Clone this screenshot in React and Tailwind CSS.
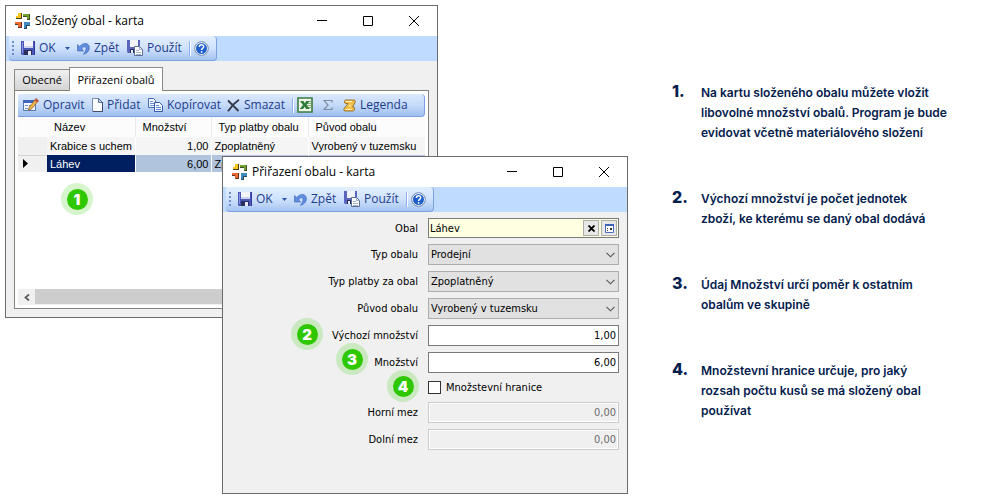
import { useState } from 'react';

const notes = [
  ['Na kartu složeného obalu můžete vložit', 'libovolné množství obalů. Program je bude', 'evidovat včetně materiálového složení'],
  ['Výchozí množství je počet jednotek', 'zboží, ke kterému se daný obal dodává'],
  ['Údaj Množství určí poměr k ostatním', 'obalům ve skupině'],
  ['Množstevní hranice určuje, pro jaký', 'rozsah počtu kusů se má složený obal', 'používat'],
];

function LogoIcon() {
  return (
    <svg className="w-4 h-4 shrink-0" viewBox="0 0 16 16">
      <path d="M3 0h4v6H1V3h2z" fill="#4a4020" />
      <path d="M3 0h3v5H1V3h2z" fill="#f5c518" />
      <path d="M8 1h7v6h-3V4H8z" fill="#3c4a2a" />
      <path d="M8 1h6v5h-2V3H8z" fill="#6fa32d" />
      <path d="M0 9h7v6H3v-3H0z" fill="#5a3524" />
      <path d="M0 9h6v5H3v-3H0z" fill="#ee6730" />
      <path d="M9 9h6v4h-3v3H9z" fill="#2b4a5e" />
      <path d="M9 9h6v3h-4v3H9z" fill="#3f8abf" />
    </svg>
  );
}

function SaveIcon() {
  return (
    <svg className="w-[14px] h-[14px] shrink-0" viewBox="0 0 14 14">
      <path d="M0 0h14v14H1l-1-1z" fill="#4a57b8" />
      <path d="M1 1h1v11H1z" fill="#8794e0" />
      <path d="M3 0h9v7H3z" fill="#f4f6fc" />
      <path d="M3 5h9v2H3z" fill="#cdd4ee" />
      <path d="M3 9h8v5H3z" fill="#2a2f5e" />
      <path d="M7 10h3v4H7z" fill="#e8ebf7" />
      <path d="M13 0h1v14h-1z" fill="#2f3a99" />
    </svg>
  );
}

function ApplyIcon() {
  return (
    <svg className="w-4 h-4 shrink-0" viewBox="0 0 16 16">
      <path d="M0 0h13v13H1l-1-1z" fill="#5a66bd" />
      <path d="M3 0h8v7H3z" fill="#f2f4fc" />
      <path d="M3 9h6v4H3z" fill="#262c5c" />
      <path d="M4 10h2v3H4z" fill="#e8ebf7" />
      <path d="M7.500 6.500h5l3 3v6h-8z" fill="#fff" stroke="#5b6f96" />
      <path d="M12.500 6.500v3h3M9 10.500h3M9 12.500h5M9 14.500h5" stroke="#8a9bbd" fill="none" strokeWidth="0.8" />
    </svg>
  );
}

function UndoIcon() {
  return (
    <svg className="w-[13px] h-[13px] shrink-0" viewBox="0 0 13 13">
      <path d="M.5 2.500v6.500h6.200L4.600 7C5.800 4.600 8.700 4 9 6.300c.2 2-1 4-2.600 6 3.300-.6 6-3.200 6-6.700C12.300.9 6.500-.3 2.700 4.500z" fill="#5f8de0" stroke="#3a62b3" strokeWidth="0.6" />
    </svg>
  );
}

function HelpIcon() {
  return (
    <svg className="w-[15px] h-[15px] shrink-0" viewBox="0 0 15 15">
      <circle cx="7.500" cy="7.500" r="6.800" fill="#fff" stroke="#6f86aa" />
      <circle cx="7.500" cy="7.500" r="5.500" fill="#1f5fcb" />
      <path d="M5.400 6c0-3 4.300-2.800 4.300-.3C9.700 7.200 7.600 7.200 7.600 9" fill="none" stroke="#fff" strokeWidth="1.500" />
      <circle cx="7.600" cy="10.900" r="0.900" fill="#fff" />
    </svg>
  );
}

function EditIcon() {
  return (
    <svg className="w-4 h-[14px] shrink-0" viewBox="0 0 16 14">
      <path d="M.5 2.500h12v10H.5z" fill="#f6f9ff" stroke="#5577b5" />
      <path d="M0 2h13v3H0z" fill="#3f68bd" />
      <path d="M2 7.500h3M2 10.500h3M6 7.500h3" stroke="#6f8fd0" />
      <path d="M13 .5l2.500 2.300L8.500 11l-3.300 1.300L6.300 9z" fill="#f0b44c" stroke="#80592a" strokeWidth="0.7" />
      <path d="M13 .5l2.500 2.300-1.500 1.700-2.500-2.300z" fill="#c9503f" />
    </svg>
  );
}

function PageIcon() {
  return (
    <svg className="w-[11px] h-[14px] shrink-0" viewBox="0 0 11 14">
      <path d="M.5.5h6l4 4v9H.5z" fill="#fafcff" stroke="#7c8cab" />
      <path d="M6.500.5v4h4z" fill="#c9d5ea" stroke="#5c7097" />
      <path d="M10.500 4v9.500H1" fill="none" stroke="#3c4c6b" />
    </svg>
  );
}

function CopyIcon() {
  return (
    <svg className="w-[15px] h-[14px] shrink-0" viewBox="0 0 15 14">
      <path d="M.5.500h5l2 2v7h-7z" fill="#f3f7ff" stroke="#4469b8" />
      <path d="M2 3.500h3M2 5.500h4M2 7.500h4" stroke="#6f92d8" />
      <path d="M6.500 4.500h5l3 3v6h-8z" fill="#f3f7ff" stroke="#3558a8" />
      <path d="M8 7.500h3M8 9.500h5M8 11.500h5" stroke="#5f84d0" />
    </svg>
  );
}

function DeleteIcon() {
  return (
    <svg className="w-[13px] h-[13px] shrink-0" viewBox="0 0 13 13">
      <path d="M1 1.500l10.500 10.500M12 .8C8 3.500 4 7.500 1 12.200" fill="none" stroke="#343b4c" strokeWidth="1.900" />
    </svg>
  );
}

function ExcelIcon() {
  return (
    <svg className="w-4 h-4 shrink-0" viewBox="0 0 16 16">
      <path d="M1 1h14v14H1z" fill="#eef6ea" stroke="#3b7a3f" strokeWidth="1.600" />
      <path d="M9 4.500h5M10 6.500h4M10 8.500h4M10 10.500h4" stroke="#7fb07c" />
      <path d="M3 4h3.500L7.800 6.200 9.300 4h3.300L9.500 8l3.300 4H9.200L7.600 9.700 6 12H2.700L6 8z" fill="#2f7d38" />
    </svg>
  );
}

function SigmaIcon() {
  return (
    <svg className="w-[10px] h-[10px] shrink-0" viewBox="0 0 10 10">
      <path d="M9 2.500V.500H1L5 5 1 9.500h8v-2" fill="none" stroke="#7f8b9f" strokeWidth="1.200" />
    </svg>
  );
}

function LegendIcon() {
  return (
    <svg className="w-[13px] h-[13px] shrink-0" viewBox="0 0 13 13">
      <path d="M2.500 1H11c1.200 0 1.600 1.800.9 2.600L9.600 8h1c1.500 0 1.300 3.500-.3 4H2C.4 12 .3 9.300 1.800 8.800L5 4.500H2.700C1 4.500 1 1.300 2.500 1z" fill="#f2c04c" stroke="#94661c" strokeWidth="0.900" />
      <path d="M3 2.500h6M3 10.500h5.500M6 6.500h2" stroke="#fff0b8" />
    </svg>
  );
}

function Separator() {
  return <span className="w-px h-[15px] bg-[#8fb2ea] shadow-[1px_0_0_#fff]" />;
}

function ToolButton({ icon, label, className = '' }) {
  return (
    <button type="button" className={`flex items-center gap-1 h-5 whitespace-nowrap ${className}`}>
      {icon}
      {label}
    </button>
  );
}

function CardToolbar() {
  return (
    <div className="bg-[#bfdbff] h-[25px] pl-[3px]">
      <div className="w-[208px] h-[25px] flex items-center rounded-r-sm rounded-bl-sm bg-linear-to-b from-[#e3efff] via-[#d0e2fd] to-[#a5c4f0] border-b border-r border-[#7ba1de] font-['Open_Sans',sans-serif] text-xs text-[#1e3c8c]">
        <span className="flex flex-col gap-[2px] w-3 pl-[3px]">
          {[0, 1, 2, 3].map((i) => (
            <span key={i} className="w-[2px] h-[2px] bg-[#6e8fc9]" />
          ))}
        </span>
        <ToolButton icon={<SaveIcon />} label="OK" className="w-[41px]" />
        <button type="button" aria-label="Další možnosti" className="w-[15px] h-5 flex items-center pl-[3px]">
          <svg className="w-[5px] h-[3px]" viewBox="0 0 5 3">
            <path d="M0 0h5L2.500 3z" fill="#2a55a5" />
          </svg>
        </button>
        <ToolButton icon={<UndoIcon />} label="Zpět" className="w-[50px]" />
        <ToolButton icon={<ApplyIcon />} label="Použít" className="w-[62px]" />
        <Separator />
        <button type="button" aria-label="Nápověda" className="h-5 pl-1">
          <HelpIcon />
        </button>
      </div>
    </div>
  );
}

function CardWindow({ title, className, children }) {
  return (
    <section className={`absolute border border-[#6b6b6b] bg-[#f0f0f0] text-black ${className}`}>
      <header className="h-[30px] bg-white flex items-center pl-[9px] pr-[18px] gap-1">
        <LogoIcon />
        <h2 className="flex-1 font-['Open_Sans',sans-serif] text-xs whitespace-nowrap">{title}</h2>
        <div className="flex gap-9">
          <button type="button" aria-label="Minimalizovat">
            <svg className="w-[10px] h-[10px]" viewBox="0 0 10 10"><path d="M0 4.500h10" stroke="#000" /></svg>
          </button>
          <button type="button" aria-label="Maximalizovat">
            <svg className="w-[10px] h-[10px]" viewBox="0 0 10 10"><path d="M.5.500h9v9h-9z" stroke="#000" fill="none" /></svg>
          </button>
          <button type="button" aria-label="Zavřít">
            <svg className="w-[10px] h-[10px]" viewBox="0 0 10 10"><path d="M0 0l10 10M10 0L0 10" stroke="#000" /></svg>
          </button>
        </div>
      </header>
      <CardToolbar />
      {children}
    </section>
  );
}

function Badge({ n, className }) {
  return (
    <span className={`absolute w-8 h-8 rounded-full bg-[#33cc00]/20 flex items-center justify-center ${className}`}>
      <span className="w-[21px] h-[21px] rounded-full bg-[#2fc800] text-white font-['Inter',sans-serif] font-black text-[15px] leading-[21px] text-center">
        {n}
      </span>
    </span>
  );
}

function PackagingList() {
  return (
    <div className="pt-[6px] px-2 pb-2">
      <div role="tablist" className="flex items-end font-['Open_Sans',sans-serif] text-[11px]">
        <button type="button" role="tab" aria-selected="false" className="h-[21px] w-[56px] bg-linear-to-b from-[#f0f0f0] to-[#d5d5d5] border border-b-0 border-[#8b8b83] leading-5">
          Obecné
        </button>
        <button type="button" role="tab" aria-selected="true" className="relative -ml-px -mb-px h-6 w-[94px] bg-white border border-b-0 border-[#8b8b83] whitespace-nowrap leading-5">
          Přiřazení obalů
        </button>
      </div>
      <div className="border border-[#84847c] bg-white p-[3px]">
        <div className="h-[23px] flex items-center pl-[5px] rounded-r-sm bg-linear-to-b from-[#dce9fd] via-[#c5daf9] to-[#9fbfee] border-b border-r border-[#7ba1de] font-['Open_Sans',sans-serif] text-xs text-[#1e3c8c]">
          <ToolButton icon={<EditIcon />} label="Opravit" className="w-[69px]" />
          <ToolButton icon={<PageIcon />} label="Přidat" className="w-[56px]" />
          <ToolButton icon={<CopyIcon />} label="Kopírovat" className="w-[79px]" />
          <ToolButton icon={<DeleteIcon />} label="Smazat" className="w-[65px]" />
          <Separator />
          <button type="button" aria-label="Excel" className="w-[30px] pl-1"><ExcelIcon /></button>
          <button type="button" aria-label="Součet" className="w-5"><SigmaIcon /></button>
          <ToolButton icon={<LegendIcon />} label="Legenda" />
        </div>
        <div className="relative min-h-[172px]">
          <table className="w-full table-fixed font-['Liberation_Sans',Arial,sans-serif] text-[11px] leading-4 whitespace-nowrap">
            <colgroup>
              <col className="w-[29px]" />
              <col className="w-[88px]" />
              <col className="w-[76px]" />
              <col className="w-[97px]" />
              <col />
            </colgroup>
            <thead>
              <tr className="h-5 bg-[#fcfcfc]">
                <th aria-label="Výběr" />
                <th className="font-normal text-left pl-[7px] border-r border-[#e9e9e9]">Název</th>
                <th className="font-normal text-left pl-[7px] border-r border-[#e9e9e9]">Množství</th>
                <th className="font-normal text-left pl-[7px] border-r border-[#e9e9e9]">Typ platby obalu</th>
                <th className="font-normal text-left pl-[7px]">Původ obalu</th>
              </tr>
            </thead>
            <tbody>
              <tr className="h-[18px] bg-[#f5f5f5]">
                <td className="bg-[#f0f0f0] border-b border-[#d9d5ce]" />
                <td className="pl-[3px]">Krabice s uchem</td>
                <td className="pr-[2px] text-right border-x border-white">1,00</td>
                <td className="pl-[3px]">Zpoplatněný</td>
                <td className="pl-[3px] border-l border-white">Vyrobený v tuzemsku</td>
              </tr>
              <tr className="h-[17px] bg-[#b0c4de]">
                <td className="bg-[#f0f0f0] pl-[5px]">
                  <svg className="w-[5px] h-[9px]" viewBox="0 0 5 9"><path d="M0 0l5 4.500L0 9z" /></svg>
                </td>
                <td className="pl-[3px] bg-[#001f60] text-white">Láhev</td>
                <td className="pr-[2px] text-right border-x border-white">6,00</td>
                <td className="pl-[3px]">Zpoplatněný</td>
                <td className="border-l border-white" />
              </tr>
            </tbody>
          </table>
          <Badge n="1" className="left-[43px] top-[66px]" />
        </div>
        <div className="h-4 flex bg-[#f0f0f0]">
          <button type="button" aria-label="Posunout vlevo" className="w-[17px] flex items-center justify-center">
            <svg className="w-[6px] h-[7px]" viewBox="0 0 6 7"><path d="M5 .5L1.500 3.500 5 6.500" stroke="#5c5c5c" strokeWidth="1.800" fill="none" /></svg>
          </button>
          <span className="w-[240px] h-[15px] bg-[#cdcdcd]" />
        </div>
      </div>
    </div>
  );
}

function SelectField({ id, label, value }) {
  return (
    <>
      <label htmlFor={id} className="text-right">{label}</label>
      <div className="relative">
        <select id={id} defaultValue={value} className="appearance-none block w-full h-[21px] pl-[2px] bg-[#e1e1e1] border border-[#adadad]">
          <option>{value}</option>
        </select>
        <svg className="absolute right-1 top-2 w-[9px] h-[6px] pointer-events-none" viewBox="0 0 9 6">
          <path d="M.5.800l4 4 4-4" stroke="#555" strokeWidth="1.100" fill="none" />
        </svg>
      </div>
    </>
  );
}

function NumberField({ id, label, value, disabled = false, badge }) {
  return (
    <>
      <div className="relative text-right">
        {badge}
        <label htmlFor={id}>{label}</label>
      </div>
      <input
        id={id}
        type="text"
        defaultValue={value}
        disabled={disabled}
        className="w-full h-[21px] pr-[2px] text-right bg-white border border-[#7a7a7a] disabled:bg-[#f0f0f0] disabled:border-[#cccccc] disabled:text-[#6d6d6d] disabled:shadow-[inset_0_0_0_1px_#fff]"
      />
    </>
  );
}

function AssignmentForm() {
  const [obal, setObal] = useState('Láhev');
  const [limit, setLimit] = useState(false);

  return (
    <form className="grid grid-cols-[195px_1fr] gap-x-[10px] gap-y-[6px] items-center pt-[6px] pr-2 pb-[43px] font-['DejaVu_Sans_Condensed','DejaVu_Sans',sans-serif] text-[11px] leading-[17px]">
      <label htmlFor="obal" className="text-right">Obal</label>
      <div className="h-5 flex items-center gap-[2px] pr-px bg-[#ffffe1] border border-[#7a7a7a]">
        <input id="obal" type="text" value={obal} onChange={(e) => setObal(e.target.value)} className="flex-1 min-w-0 pl-px outline-none" />
        <button type="button" aria-label="Vymazat" onClick={() => setObal('')} className="w-4 h-4 flex items-center justify-center bg-[#e8e8e8] border border-[#adadad]">
          <svg className="w-[7px] h-[7px]" viewBox="0 0 7 7"><path d="M.5.500l6 6M6.500.500l-6 6" stroke="#000" strokeWidth="1.800" /></svg>
        </button>
        <button type="button" aria-label="Vybrat" className="w-4 h-4 flex items-center justify-center bg-[#e8e8e8] border border-[#adadad]">
          <svg className="w-[9px] h-[9px]" viewBox="0 0 9 9">
            <path d="M.5.500h8v8h-8z" fill="#fff" stroke="#4a6fc0" />
            <path d="M0 0h9v2H0z" fill="#3c63b8" />
            <path d="M2 4h1v1H2zM2 6h1v1H2zM5 4h2v2H5z" fill="#333" />
          </svg>
        </button>
      </div>
      <SelectField id="typ" label="Typ obalu" value="Prodejní" />
      <SelectField id="platba" label="Typ platby za obal" value="Zpoplatněný" />
      <SelectField id="puvod" label="Původ obalu" value="Vyrobený v tuzemsku" />
      <NumberField id="vychozi" label="Výchozí množství" value="1,00" badge={<Badge n="2" className="right-[95px] -top-[9px]" />} />
      <NumberField id="mnozstvi" label="Množství" value="6,00" badge={<Badge n="3" className="right-[50px] -top-[11px]" />} />
      <div className="relative h-[17px]">
        <Badge n="4" className="-right-px -top-[9px]" />
      </div>
      <div className="h-[17px] flex items-center gap-[5px]">
        <input
          id="hranice"
          type="checkbox"
          checked={limit}
          onChange={(e) => setLimit(e.target.checked)}
          className="appearance-none w-[13px] h-[13px] bg-white border border-[#333] checked:bg-[#333]"
        />
        <label htmlFor="hranice">Množstevní hranice</label>
      </div>
      <NumberField id="horni" label="Horní mez" value="0,00" disabled={!limit} />
      <NumberField id="dolni" label="Dolní mez" value="0,00" disabled={!limit} />
    </form>
  );
}

export default function App() {
  return (
    <main className="min-h-screen flex bg-white">
      <div className="relative flex-1">
        <CardWindow title="Složený obal - karta" className="top-[5px] left-[5px] right-[202px]">
          <PackagingList />
        </CardWindow>
        <CardWindow title="Přiřazení obalu - karta" className="top-[156px] left-[222px] right-3">
          <AssignmentForm />
        </CardWindow>
      </div>
      <ol className="w-[360px] pt-[81px] pl-8 flex flex-col gap-11 font-['Inter',sans-serif] text-[#04204d]">
        {notes.map((lines, i) => (
          <li key={i} className="flex items-baseline">
            <span className="w-[29px] text-base leading-5 font-extrabold">{i + 1}.</span>
            <p className="flex-1 text-xs leading-5 font-semibold whitespace-nowrap">
              {lines.map((line) => (
                <span key={line} className="block">{line}</span>
              ))}
            </p>
          </li>
        ))}
      </ol>
    </main>
  );
}
